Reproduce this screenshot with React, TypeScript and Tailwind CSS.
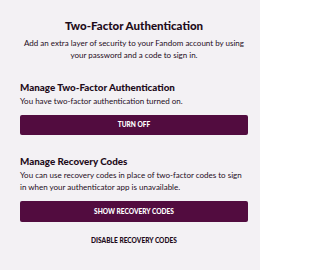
export default function App() {
  return (
    <div
      className="h-[270px] w-[260px] bg-[#f3f1f4] pl-[20px] pr-[12px] pt-[18px] text-[#1e0c1b]"
      style={{ fontFamily: 'Lato, "Noto Sans", sans-serif' }}
    >
      <h1 className="text-center text-[11.5px] font-black leading-[16px]">Two-Factor Authentication</h1>
      <p className="mt-[3px] text-center text-[8px] leading-[12px]">
        Add an extra layer of security to your Fandom account by using your password and a code to sign in.
      </p>

      <section className="mt-[19px]">
        <h2 className="text-[9.8px] font-black leading-[14px]">Manage Two-Factor Authentication</h2>
        <p className="mt-[1px] text-[8px] leading-[12px]">You have two-factor authentication turned on.</p>
        <button className="mt-[8px] flex h-[20px] w-full items-center justify-center rounded-[2px] bg-[#520c3f] text-[6.6px] font-black uppercase text-white">
          Turn off
        </button>
      </section>

      <section className="mt-[19px]">
        <h2 className="text-[9.8px] font-black leading-[14px]">Manage Recovery Codes</h2>
        <p className="mt-[1px] text-[8px] leading-[12px]">
          You can use recovery codes in place of two-factor codes to sign in when your authenticator app is unavailable.
        </p>
        <button className="mt-[8px] flex h-[21px] w-full items-center justify-center rounded-[2px] bg-[#520c3f] text-[6.6px] font-black uppercase text-white">
          Show recovery codes
        </button>
        <button className="mt-[10px] flex h-[18px] w-full items-center justify-center text-[6.6px] font-black uppercase">
          Disable recovery codes
        </button>
      </section>
    </div>
  )
}
